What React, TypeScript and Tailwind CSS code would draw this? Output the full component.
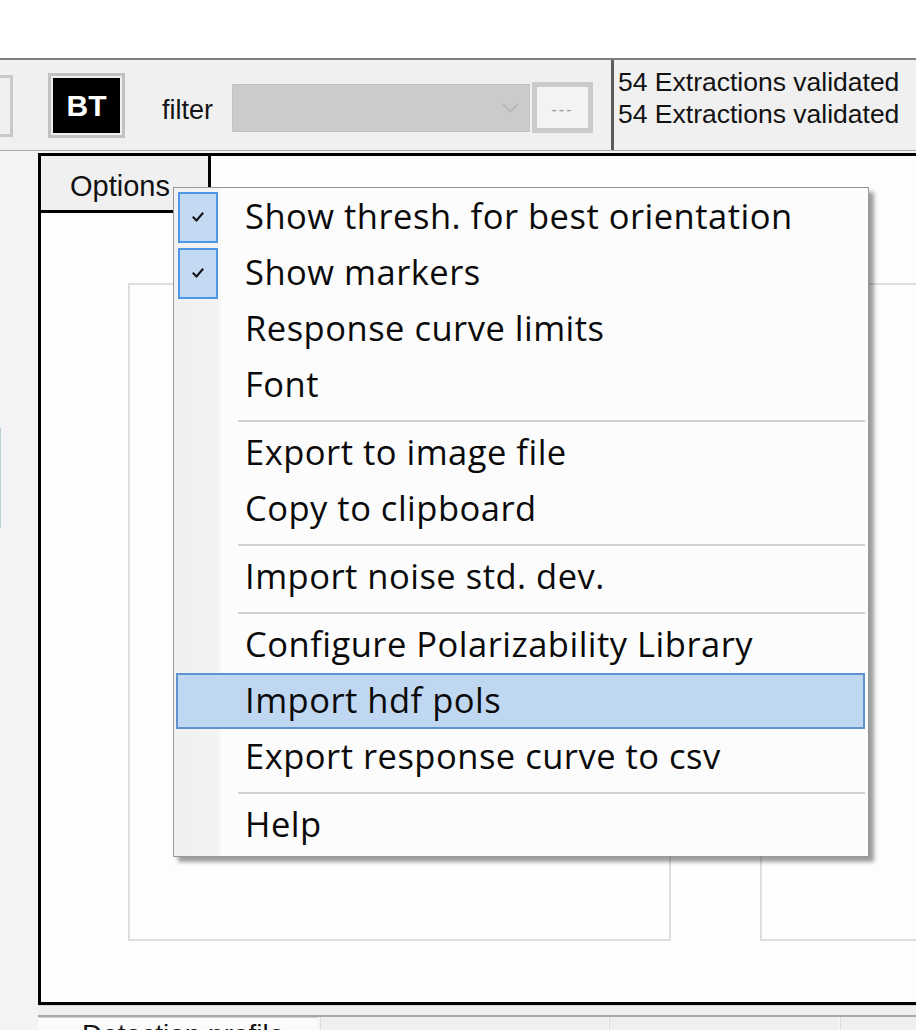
import * as React from "react"

// Windows-style toolbar + plot panel with an open "Options" context menu

type MenuEntry =
  | { kind: "item"; label: string; checked?: boolean; active?: boolean }
  | { kind: "sep" }

const menuEntries: MenuEntry[] = [
  { kind: "item", label: "Show thresh. for best orientation", checked: true },
  { kind: "item", label: "Show markers", checked: true },
  { kind: "item", label: "Response curve limits" },
  { kind: "item", label: "Font" },
  { kind: "sep" },
  { kind: "item", label: "Export to image file" },
  { kind: "item", label: "Copy to clipboard" },
  { kind: "sep" },
  { kind: "item", label: "Import noise std. dev." },
  { kind: "sep" },
  { kind: "item", label: "Configure Polarizability Library" },
  { kind: "item", label: "Import hdf pols", active: true },
  { kind: "item", label: "Export response curve to csv" },
  { kind: "sep" },
  { kind: "item", label: "Help" },
]

function CheckMark() {
  return (
    <svg width="12" height="11" viewBox="0 0 12 11" fill="none">
      <path d="M1.5 5.5 L4.5 8.5 L10.5 1.5" stroke="#111" strokeWidth="2" strokeLinecap="square" />
    </svg>
  )
}

function OptionsMenu() {
  return (
    <div className="absolute left-[173px] top-[187px] w-[696px] h-[670px] border border-[#979797] bg-[linear-gradient(to_right,#f0f0f0_0px,#f3f3f3_44px,#fcfcfc_48px)] pt-[1px] pb-[3px] shadow-[5px_5px_4px_rgba(0,0,0,0.38)] font-['Open_Sans','Noto_Sans',sans-serif] text-[34.5px] tracking-[0.5px] text-[#0a0a0a]">
      {menuEntries.map((entry, i) =>
        entry.kind === "sep" ? (
          <div key={i} className="h-[12px] pt-[7px] pl-[64px] pr-[3px]">
            <div className="h-[2px] bg-[#d2d2d2]" />
          </div>
        ) : (
          <div
            key={i}
            className={
              entry.active
                ? "flex items-center h-[56px] ml-[2px] mr-[3px] border-2 border-[#5f93cf] bg-[#bfd7f0]"
                : "flex items-center h-[56px] ml-[2px] mr-[3px] border-2 border-transparent"
            }
          >
            {entry.checked ? (
              <div className="flex items-center justify-center w-[40px] h-[51px] border-2 border-[#4b97e2] bg-[#c3daf2]">
                <CheckMark />
              </div>
            ) : (
              <div className="w-[40px] h-[51px]" />
            )}
            <span className="ml-[27px] leading-[56px] whitespace-nowrap -mt-[2px]">{entry.label}</span>
          </div>
        )
      )}
    </div>
  )
}

export default function App() {
  return (
    <div className="relative w-[916px] h-[1030px] overflow-hidden bg-white font-['Liberation_Sans',Arial,sans-serif]">
      {/* top blank strip */}
      <div className="h-[58px] bg-white" />

      {/* toolbar */}
      <div className="flex h-[93px] border-t-2 border-b border-[#7d7d7d] border-b-[#a9a9a9] bg-[#f0f0f0]">
        <div className="flex items-start w-[610px] shrink-0">
          <div className="mt-[15px] w-[13px] h-[62px] border-[3px] border-l-0 border-[#c9c9c9] bg-[#f0f0f0]" />
          <div className="ml-[35px] mt-[13px] w-[77px] h-[65px] border-[3px] border-[#c2c2c2] p-[2px]">
            <div className="flex h-full items-center justify-center bg-black text-white font-bold text-[30px] leading-none">
              BT
            </div>
          </div>
          <div className="ml-[37px] mt-[34px] w-[70px] text-[27px] leading-[32px] text-[#141414]">filter</div>
          <div className="relative mt-[24px] w-[298px] h-[48px] border border-[#c2c2c2] bg-[#cbcbcb]">
            <svg className="absolute right-[10px] top-[18px]" width="17" height="10" viewBox="0 0 17 10" fill="none">
              <path d="M1 1 L8.5 8.5 L16 1" stroke="#b3b3b3" strokeWidth="1.5" />
            </svg>
          </div>
          <div className="ml-[2px] mt-[22px] w-[61px] h-[51px] border-[5px] border-[#cbcbcb] bg-[#f3f3f3] flex items-end justify-center pb-[10px]">
            <span className="text-[16px] leading-none tracking-[2px] text-[#9a9a9a]">---</span>
          </div>
        </div>
        <div className="w-[3px] ml-[1px] bg-[#5c5c5c]" />
        <div className="flex-1 pl-[4px] pt-[6px] text-[26.5px] leading-[32px] text-[#121212] whitespace-nowrap">
          <div>54 Extractions validated</div>
          <div>54 Extractions validated</div>
        </div>
      </div>

      {/* main area */}
      <div className="flex h-[879px] bg-[#f3f2f4]">
        <div className="w-[38px] shrink-0">
          <div className="mt-[277px] w-[1px] h-[100px] bg-[#b6d0d6]" />
        </div>
        <div className="flex-1 flex flex-col pt-[2px] min-w-0">
          <div className="h-[852px] border-t-[3px] border-l-[3px] border-b-[3px] border-black bg-[#fdfdfd] overflow-hidden">
            <div className="w-[170px] h-[57px] border-r-[3px] border-b-[3px] border-black bg-[#f0f0f0] pl-[29px] pt-[14px] text-[29px] leading-[32px] text-[#121212]">
              Options
            </div>
            <div className="flex mt-[70px] ml-[87px]">
              <div className="w-[543px] h-[658px] shrink-0 border-2 border-[#dedede]" />
              <div className="ml-[89px] w-[300px] h-[658px] shrink-0 border-2 border-[#dedede]" />
            </div>
          </div>
          <div className="h-[12px] border-t border-[#d9d9d9] border-b-2 border-b-[#a8a8a8] bg-[#efefef]" />
          <div className="flex flex-1 overflow-hidden">
            <div className="w-[280px] border-t border-[#d0d0d0] bg-[#fbfbfb] pl-[44px] pt-[3px] text-[28px] leading-[28px] text-[#111] whitespace-nowrap">
              Detection profile
            </div>
            <div className="w-[287px] ml-[2px] bg-[#efefef] border-l border-[#dcdcdc]" />
            <div className="w-[229px] ml-[2px] bg-[#efefef] border-l border-[#dcdcdc]" />
            <div className="flex-1 ml-[2px] bg-[#efefef] border-l border-[#dcdcdc]" />
          </div>
        </div>
      </div>

      <OptionsMenu />
    </div>
  )
}
